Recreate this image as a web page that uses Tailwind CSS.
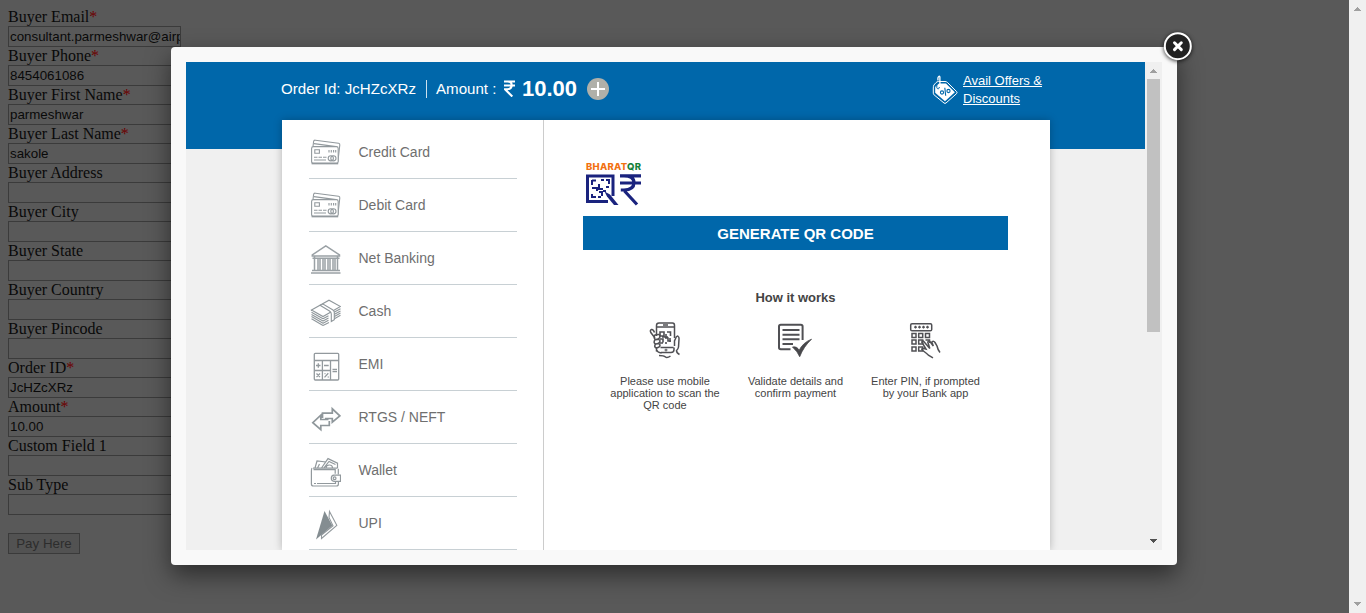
<!DOCTYPE html>
<html lang="en">
<head>
<meta charset="utf-8">
<title>Payment</title>
<script src="https://cdn.jsdelivr.net/npm/@tailwindcss/browser@4"></script>
</head>
<body class="relative flex h-[613px] overflow-hidden bg-[#595959] font-['Liberation_Sans',Arial,sans-serif]">

<form class="flex-1 p-2">
  <div class="flex w-[173px] flex-col text-[13.33px] text-[#090909] [&>label]:h-[18px] [&>label]:font-['Liberation_Serif',serif] [&>label]:text-[16px] [&>label]:leading-[18px] [&>label]:whitespace-nowrap [&>label>b]:font-normal [&>label>b]:text-[#6c0000] [&>div]:h-[21px] [&>div]:overflow-hidden [&>div]:border [&>div]:border-[#3b3b3b] [&>div]:px-px [&>div]:leading-[19px] [&>div]:whitespace-nowrap">
    <label>Buyer Email<b>*</b></label><div>consultant.parmeshwar@airp</div>
    <label>Buyer Phone<b>*</b></label><div>8454061086</div>
    <label>Buyer First Name<b>*</b></label><div>parmeshwar</div>
    <label>Buyer Last Name<b>*</b></label><div>sakole</div>
    <label>Buyer Address</label><div></div>
    <label>Buyer City</label><div></div>
    <label>Buyer State</label><div></div>
    <label>Buyer Country</label><div></div>
    <label>Buyer Pincode</label><div></div>
    <label>Order ID<b>*</b></label><div>JcHZcXRz</div>
    <label>Amount<b>*</b></label><div>10.00</div>
    <label>Custom Field 1</label><div></div>
    <label>Sub Type</label><div></div>
  </div>
  <button type="button" class="mt-[18px] block h-[21px] w-[72px] border border-[#3a3a3a] bg-[#525252] text-[13.33px] leading-[19px] text-[#2d2d2d]">Pay Here</button>
</form>

<div class="flex w-[17px] flex-col items-center justify-between bg-[#f0f0f0] py-[7px]">
  <svg class="h-1 w-[7px]" viewBox="0 0 7 4" shape-rendering="crispEdges"><path d="M3.5 0L7 4H0z" fill="#a0a0a0"/></svg>
  <svg class="h-1 w-[7px]" viewBox="0 0 7 4" shape-rendering="crispEdges"><path d="M0 0h7L3.5 4z" fill="#a0a0a0"/></svg>
</div>

<!-- icon symbols -->
<svg class="absolute h-0 w-0">
  <symbol id="cards" viewBox="0 0 32 28"><g fill="none" stroke="#92999d" stroke-width="1.1"><path d="M3 8.5L3.6 3.5Q3.8 2 5.4 2.2L28.5 5.3Q30 5.6 29.8 7L27.9 23.5M4 5.6l22 3"/><rect x="1.6" y="8.6" width="26.6" height="16.8" rx="1.8" fill="#fff"/><path d="M1.6 25.5h26.6" stroke-width="1.7"/><path d="M4.8 11.7h4.6v3.6H4.8zM19 12v2.6M21.3 12v2.6M23.6 12v2.6M25.7 12v2.6M4 19.3h3.5M8.5 19.3h3.5M13 19.3h3.5M4 22h12"/><circle cx="20.8" cy="20.3" r="2.6"/><circle cx="23.4" cy="20.3" r="2.6"/></g></symbol>
</svg>

<!-- payment dialog -->
<div class="absolute top-[47px] left-[171px] h-[518px] w-[1006px] rounded bg-[#f9f9f9] p-[15px] shadow-[0_10px_25px_rgba(0,0,0,0.5)]">
  <div class="flex h-[488px] overflow-hidden bg-[#f0f0f0]">
    <div class="w-[959px]">
      <header class="flex h-[87px] bg-[#0067aa] pl-[95px] text-white">
        <div class="flex h-[54px] w-[651px] items-center text-[15.1px]">
          <span class="w-[146px] border-r border-white/80 leading-[18px] whitespace-nowrap">Order Id: JcHZcXRz</span>
          <span class="ml-[9px] w-[68px] whitespace-nowrap">Amount :</span>
          <svg class="mb-[2px] h-[17px] w-[11px]" viewBox="0 0 11 17" fill="none" stroke="#fff" stroke-width="2.1"><path d="M0 1.5h11M0 5.5h11M0 1.5h3.5q4.2 0 4.2 3.8T3.5 9.3H1L8.3 16.5"/></svg>
          <span class="ml-[7px] w-[65px] pb-[2px] text-[22px] font-bold">10.00</span>
          <svg class="h-[22px] w-[22px]" viewBox="0 0 22 22"><circle cx="11" cy="11" r="11" fill="#b0b0a9"/><path d="M11 4v14M4 11h14" stroke="#fff" stroke-width="2"/></svg>
        </div>
        <svg class="mt-[13px] h-[30px] w-[26px]" viewBox="0 0 26 30" fill="none" stroke="#fff"><path d="M1.3 13V18.2q0 1 .8 1.7L12 28q1 .8 2 0l10.5-9.3q1-1 .2-2L15.3 7.3Q14.5 6.5 13 6.5H6.5Q5 6.5 4 7.6L1.9 10Q1.3 11 1.3 13z" stroke-width="1"/><path d="M3.2 12.5V17.7L13 26.2l9.8-8.9L14 8.5H7L3.3 11.8z" fill="#fff" stroke="none"/><path d="M4.8 9.5v3.1q.3 1.4 1.5 1.2 1.2-.3 1-1.8" stroke="#0067aa" stroke-width="1"/><path d="M7.9 10V2.2Q7.8.8 6.7 1.5T6 5.5" stroke-width="1.3"/><g stroke="#0067aa" stroke-width="1.1"><circle cx="10" cy="17.5" r="1.6"/><circle cx="16.5" cy="16" r="1.6"/><path d="M12.8 12.8l.9 8"/></g></svg>
        <a class="mt-[10px] ml-[5px] w-[90px] text-[13px] leading-[18px] underline underline-offset-1">Avail Offers &amp; Discounts</a>
      </header>

      <main class="-mt-[29px] ml-24 flex h-[430px] w-[768px] bg-white shadow-[0_0_8px_rgba(0,0,0,0.25)]">
        <nav class="w-[262px] border-r border-[#ccc] pt-[6px] pl-[27px] text-[14px] text-[#6f6f6f] [&>a]:flex [&>a]:h-[53px] [&>a]:w-52 [&>a]:items-center [&>a]:gap-[17.5px] [&>a]:border-b [&>a]:border-[#c8d0d4] [&_svg]:mt-[2px] [&_svg]:h-8 [&_svg]:w-8">
          <a><svg viewBox="0 0 32 32"><use href="#cards" y="1" x="1" width="32" height="28"/></svg>Credit Card</a>
          <a><svg viewBox="0 0 32 32"><use href="#cards" y="1" x="1" width="32" height="28"/></svg>Debit Card</a>
          <a><svg viewBox="0 0 32 32" fill="none" stroke="#9aa1a5" stroke-width="1.5"><path d="M3.3 13V11.8L16.8 2.8 30.5 11.8V13zM3.5 15.2h27M5.5 13v14M28.5 13v14M9 15v12M11 15v12M14 15v12M16 15v12M19 15v12M21 15v12M24 15v12M26 15v12M3 27.5h28M2 30h29.5"/></svg>Net Banking</a>
          <a><svg viewBox="0 0 32 32" fill="none" stroke="#8f979b" stroke-width="1.1"><path d="M2.5 14L20 4.2 31.5 10.5 14 20.6zM2.5 16.2L14 22.8M2.5 18.4L14 25M2.5 20.6L14 27.2M2.5 22.8L14 29.4M2.5 14v1M14 22.8l5.5-3M14 25l5.5-3M14 27.2l5.5-3M14 29.4l6-3M25 16.3l6.5-3.6M25 18.5l6.5-3.6M25 20.7l6.5-3.6M25 22.9l6.5-3.6"/><path d="M11 9.3L20.5 15q1.8 1.2 1.8 3v7.5l3-1.8V16.5q0-1.6-1.7-2.7L14 8z" fill="#fff"/></svg>Cash</a>
          <a><svg viewBox="0 0 32 32" fill="none" stroke="#92999d" stroke-width="1.3"><rect x="5.3" y="4.3" width="24.4" height="26.7" rx="1"/><path d="M5.3 11.5h24.4M5.3 21.5h16.2M13.4 11.5v19.5M21.5 11.5v19.5M7 16.5h4.5M9.3 14.2v4.6M15 16.5h4.7M23.5 20.5h4.5M23.5 22.7h4.5M7.5 24.5l3.5 3.6M11 24.5l-3.5 3.6M19.3 24.2l-3.8 4.2M15.5 24.7h1M18.7 28h1"/></svg>EMI</a>
          <a><svg viewBox="0 0 32 32" fill="none" stroke="#8f979b" stroke-width="1.7"><path d="M13.5 16V11.2h9.8V6.8l7.5 7-7.5 6.3v-3.6H16M19.5 17.5h-7.7V13.2L3.8 20.7l8 7V23.5h8.5v-4.5"/></svg>RTGS / NEFT</a>
          <a><svg viewBox="0 0 32 32" fill="none" stroke="#92999d" stroke-width="1.2"><path d="M6 13L8 6l9 1M8.5 13l2-4M12.5 13L19 3.6l9.5 4.5V13M14.8 13L20 6.5l6.5 3M17 13q0-2.8 3.2-3t3.4 3M4 13.2h24.5M3 13q-.6 1-.6 3v13q0 2 2 2h23q2 0 2-2v-2.5M29.3 19.5V13.8M4.5 14.7h21.7v4M5 28.5h2M8 28.5h18.5v-2"/><path d="M31.5 20.2H25q-2.7.3-2.7 3.1t2.7 3.1h6.5z" fill="#fff"/><circle cx="25.6" cy="23.3" r="1.4"/></svg>Wallet</a>
          <a><svg viewBox="0 0 32 32"><path d="M20.5 3.5L27.8 17.3 12.5 30.5V27L24 17.8 20 9.5z" fill="#fff" stroke="#92999d" stroke-width="1.1"/><path d="M15.5 3L23.3 17.5 7 31.5z" fill="#848d91"/></svg>UPI</a>
        </nav>

        <section class="w-[505px] pt-[42px] pl-[39px] text-[#444]">
          <div class="h-[54px] w-[58px] pl-[3px]">
            <p class="h-[10px] font-[Inter,sans-serif] text-[9.5px] leading-[10px] font-extrabold tracking-[0.25px] whitespace-nowrap text-[#f27112]">BHARAT<span class="text-[#16823b]">QR</span></p>
            <svg class="mt-[1px] h-[33px] w-[56px]" viewBox="0 0 56 33" fill="none" stroke="#1a237e"><path d="M27 23V3H1.5V28.5H22" stroke-width="3"/><path d="M6 7.5h4M6 7v5M15 7h3M20 7h3v4M6 15h5v3M13 11v5h4M20 14h3M6 21v3h4M13 19h3v4M17 18h3M12 24h3" stroke-width="2"/><path d="M18.5 18.5l5.5 3 8.5 10.5h-4.5l-7-8.5z" fill="#1a237e" stroke="none"/><path d="M34 2.8h21M34 10h21M38 2.8q10 0 10 7t-10 7.2H34.8M38.5 18L51 31.5" stroke-width="3.2"/></svg>
          </div>
          <div class="flex h-[34px] w-[425px] items-center justify-center bg-[#0067aa] pt-[2px] text-[15px] font-bold text-white">GENERATE QR CODE</div>
          <h2 class="mt-10 w-[425px] text-center text-[13px] leading-[15px] font-bold">How it works</h2>
          <div class="mt-4 ml-[17px] flex text-center text-[11px] leading-[12px] [&_svg]:mb-4 [&_svg]:h-[38px] [&_svg]:w-[38px] [&>div]:flex [&>div]:w-[130px] [&>div]:flex-col [&>div]:items-center">
            <div><svg viewBox="0 0 38 38" fill="none" stroke="#505054" stroke-width="1.5"><path d="M10.5 15V4.5Q10.5 2 13 2h13.5Q28.5 2 28.5 4.5V17M10.5 6h18M17 4h5M15 31.5h10q3 0 3-3v-2M14.5 26.5h13M10.5 26v4.5"/><path d="M14 11h4v4h-4zM21 11h3.5v4M14 18h3v3.5M19 17h3v3h3M20 13v4M24 17v4M16 16h6M14 22h3M20 21v2" stroke-width="1.6"/><path d="M8.5 11.5q-1.2-3.5-3-3-1.8.7-.7 3L9 17M9 14q5-1.5 5 1.3T9.5 18.5Q7 17 9 14zM9 18.7q5-1 5 1.3T9.5 23Q7 22 9 18.7zM9.5 23q4.5-1 4.5 1.3T10.3 27Q7.7 26 9.5 23zM10.5 29q1 2.5 5 3M13 34.5q5 0 6.5 1.5t5-1M28.5 25V20l1.7-4q1-1.5 2-.5 1 .7.8 2.5l-.5 8q-.3 2-2 3.5 0 2.5 3 4"/><path d="M18.5 29h3M20 27.7v2.8" stroke-width="1"/></svg>Please use mobile<br>application to scan the<br>QR code</div>
            <div><svg viewBox="0 0 38 38" fill="none" stroke="#505054" stroke-width="2"><path d="M14.5 28.3H4.8q-1.8 0-1.8-1.8V5.5q0-1.8 1.8-1.8h20q1.8 0 1.8 1.8V19"/><path d="M6.5 9h17M6.5 13.7h17M6.5 18.3h17M6.5 23h10.5"/><path d="M16.5 26q5-.8 6.5 3.5 4-8 12.5-11.3-8 7.5-11.8 17.5-2-5-7.2-9.7z" fill="#48484b" stroke="#48484b" stroke-width=".8"/></svg><span class="pl-px">Validate details and<br>confirm payment</span></div>
            <div><svg viewBox="0 0 38 38" fill="none" stroke="#505054" stroke-width="1.5"><rect x="4.7" y="2.7" width="21" height="7" rx="1.3"/><path d="M8 6.2h3M12 6.2h3M16 6.2h3M20 6.2h3M9.5 4.8v2.8M13.5 4.8v2.8M17.5 4.8v2.8M21.5 4.8v2.8" stroke-width="1.2"/><path d="M6 12.5h4v4H6zM12.7 12.5h4v4h-4zM19.5 12.5h4v4h-4zM6 19h4v4H6zM12.7 19h4v4h-4zM19.5 19h4v3M6 26h4v4H6zM12.7 26h4v4h-4z"/><path d="M15.5 20.5q.8-1.7 2.3 0l6 7-2-6.5q1-2 2.5 0l3 4-1.5-4q2-1.5 3.2.5l2 3.5q.7 3.5 3 6.5M15.5 20.5l4.5 7.5-3.2-.8q-2 .7 0 2.3 4 3 6 5l4.2 2.3"/></svg><span class="pl-px">Enter PIN, if prompted<br>by your Bank app</span></div>
          </div>
        </section>
      </main>
    </div>
    <div class="flex w-[17px] flex-col items-center bg-[#f0f0f0] pt-[7px] pb-[7px]">
      <svg class="h-1 w-[7px] shrink-0" viewBox="0 0 7 4" shape-rendering="crispEdges"><path d="M3.5 0L7 4H0z" fill="#a0a0a0"/></svg>
      <div class="mt-[6px] h-[253px] w-[13px] bg-[#c1c1c1]"></div>
      <svg class="mt-auto h-1 w-[7px] shrink-0" viewBox="0 0 7 4" shape-rendering="crispEdges"><path d="M0 0h7L3.5 4z" fill="#505050"/></svg>
    </div>
  </div>
  <svg class="absolute -top-[17px] -right-[19px] h-9 w-9 drop-shadow-[0_1px_2px_rgba(0,0,0,0.8)]" viewBox="0 0 36 36"><circle cx="17.8" cy="16.2" r="13" fill="#222" stroke="#fff" stroke-width="2"/><path d="M14.5 12.8l6.8 6.8M21.3 12.8L14.5 19.6" stroke="#fff" stroke-width="3" stroke-linecap="round"/></svg>
</div>
</body>
</html>
